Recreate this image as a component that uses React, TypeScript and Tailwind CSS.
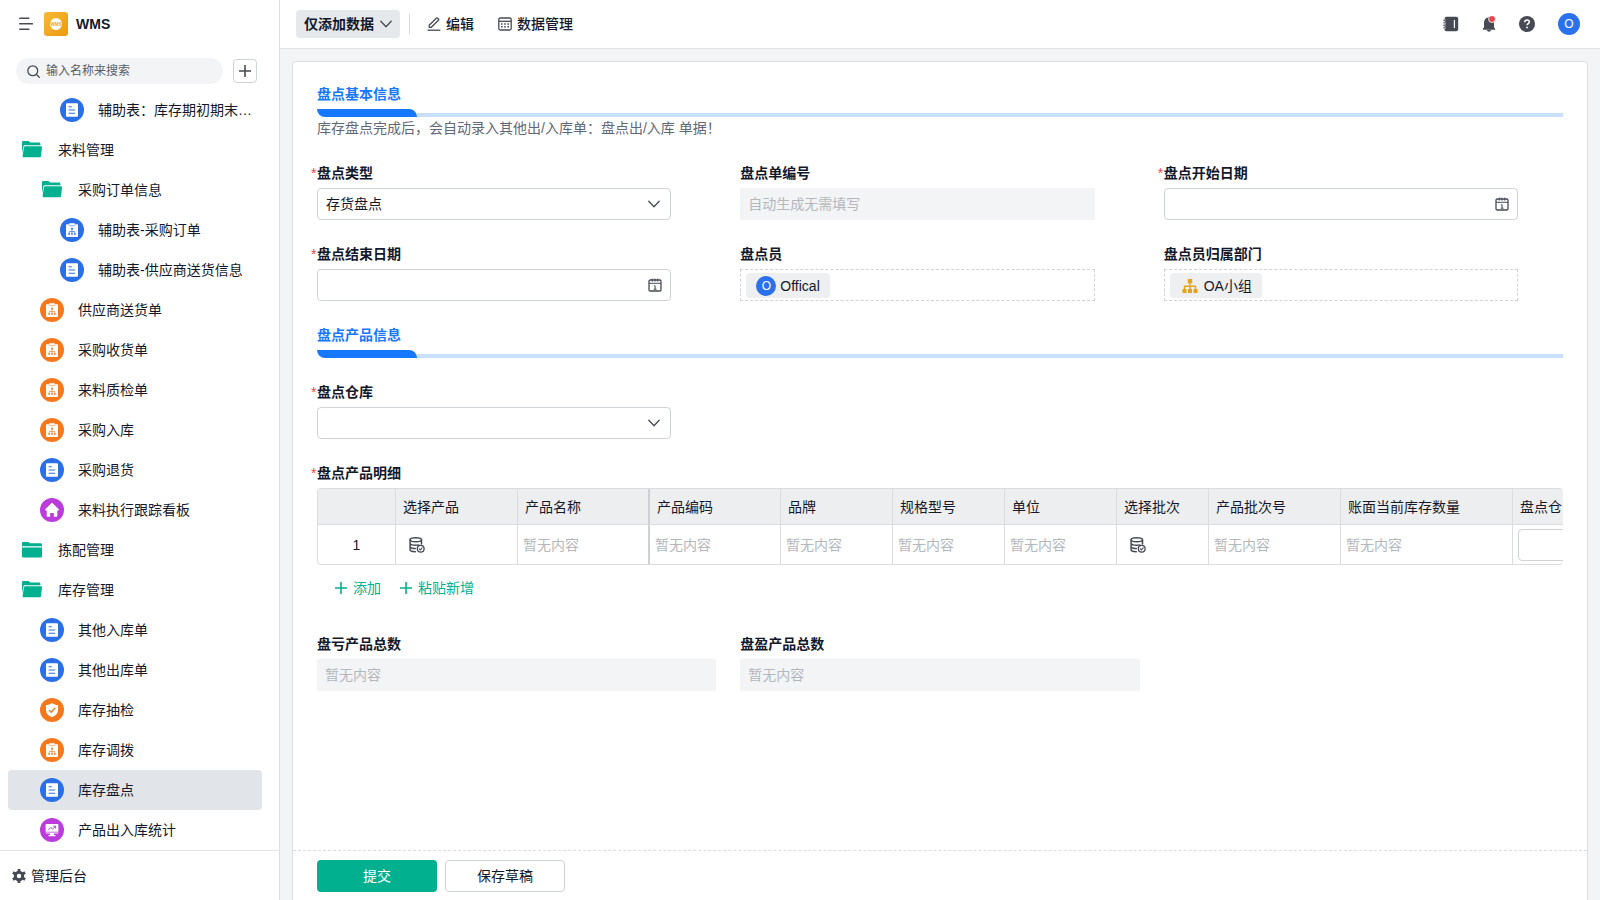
import { useId, type ReactNode } from 'react'

type IconKind = 'folder' | 'folderOpen' | 'form' | 'flow' | 'home' | 'shield' | 'chart'

interface MenuItem {
    name: string
    level: 0 | 1 | 2
    icon: IconKind
    color: string
    active?: boolean
}

const BLUE = 'text-[#2a6fe5]'
const ORANGE = 'text-[#f5781d]'
const PURPLE = 'text-[#bb3bdb]'
const GREEN = 'text-[#00b08f]'

const menu: MenuItem[] = [
    { name: '辅助表：库存期初期末…', level: 2, icon: 'form', color: BLUE },
    { name: '来料管理', level: 0, icon: 'folderOpen', color: GREEN },
    { name: '采购订单信息', level: 1, icon: 'folderOpen', color: GREEN },
    { name: '辅助表-采购订单', level: 2, icon: 'flow', color: BLUE },
    { name: '辅助表-供应商送货信息', level: 2, icon: 'form', color: BLUE },
    { name: '供应商送货单', level: 1, icon: 'flow', color: ORANGE },
    { name: '采购收货单', level: 1, icon: 'flow', color: ORANGE },
    { name: '来料质检单', level: 1, icon: 'flow', color: ORANGE },
    { name: '采购入库', level: 1, icon: 'flow', color: ORANGE },
    { name: '采购退货', level: 1, icon: 'form', color: BLUE },
    { name: '来料执行跟踪看板', level: 1, icon: 'home', color: PURPLE },
    { name: '拣配管理', level: 0, icon: 'folder', color: GREEN },
    { name: '库存管理', level: 0, icon: 'folderOpen', color: GREEN },
    { name: '其他入库单', level: 1, icon: 'form', color: BLUE },
    { name: '其他出库单', level: 1, icon: 'form', color: BLUE },
    { name: '库存抽检', level: 1, icon: 'shield', color: ORANGE },
    { name: '库存调拨', level: 1, icon: 'flow', color: ORANGE },
    { name: '库存盘点', level: 1, icon: 'form', color: BLUE, active: true },
    { name: '产品出入库统计', level: 1, icon: 'chart', color: PURPLE },
]

const indent = ['pl-3', 'pl-8', 'pl-[52px]']

const columns = [
    { title: '选择产品', width: 'w-[122px]', kind: 'pick' },
    { title: '产品名称', width: 'w-[132px]', kind: 'empty', frozen: true },
    { title: '产品编码', width: 'w-[131px]', kind: 'empty' },
    { title: '品牌', width: 'w-[112px]', kind: 'empty' },
    { title: '规格型号', width: 'w-[112px]', kind: 'empty' },
    { title: '单位', width: 'w-[112px]', kind: 'empty' },
    { title: '选择批次', width: 'w-[92px]', kind: 'pick' },
    { title: '产品批次号', width: 'w-[132px]', kind: 'empty' },
    { title: '账面当前库存数量', width: 'w-[172px]', kind: 'empty' },
    { title: '盘点仓', width: 'w-[172px]', kind: 'input' },
]

function MenuIcon({ kind }: { kind: IconKind }) {
    if (kind === 'folder') {
        return (
            <svg viewBox="0 0 24 24" className="size-6 shrink-0" fill="currentColor" aria-hidden="true">
                <path d="M2 5.200C2 4.500 2.500 4 3.200 4h4.900c.5 0 .8.2 1.100.5l.8.800h10.600c.8 0 1.400.6 1.400 1.400v1.500H2z" />
                <path d="M2 9.600h20v8.600c0 .8-.6 1.400-1.400 1.400H3.400c-.8 0-1.400-.6-1.400-1.400z" />
            </svg>
        )
    }
    if (kind === 'folderOpen') {
        return (
            <svg viewBox="0 0 24 24" className="size-6 shrink-0" fill="currentColor" aria-hidden="true">
                <path d="M2 4.200C2 3.500 2.500 3 3.200 3h4.900c.5 0 .8.2 1.100.5l.8 1h9c.8 0 1.400.6 1.400 1.400v1.300H5c-.9 0-1.500.6-1.700 1.400L2 15.500z" />
                <path d="M5.600 8.200h15.200c.8 0 1.300.7 1.200 1.400l-1 8.300c-.1.900-.8 1.400-1.600 1.400H3.800c-.8 0-1.300-.6-1.200-1.300l1.300-8.400c.1-.8.8-1.400 1.700-1.400z" />
            </svg>
        )
    }
    return (
        <svg viewBox="0 0 24 24" className="size-6 shrink-0" aria-hidden="true">
            <circle cx="12" cy="12" r="12" fill="currentColor" />
            {kind === 'form' && (
                <>
                    <rect x="6" y="5.300" width="12" height="13.500" rx="1" fill="#fff" />
                    <path d="M8.600 8.700h3.200M8.600 12h6.500M8.600 15.200h6.500" stroke="currentColor" strokeWidth="1.100" />
                </>
            )}
            {kind === 'flow' && (
                <>
                    <path d="M7 6.200h2.200V5.200h5.600v1H17c.6 0 1 .4 1 1V18c0 .6-.4 1-1 1H7c-.6 0-1-.4-1-1V7.200c0-.6.4-1 1-1z" fill="#fff" />
                    <path d="M9 6.600c.2.900.6 1.100 1.200 1.100h3.600c.6 0 1-.2 1.200-1.100" stroke="currentColor" strokeWidth=".6" fill="none" />
                    <path d="M12 11v4.500M9.200 15.500v-1.900h5.600v1.900" stroke="currentColor" strokeWidth=".7" fill="none" />
                    <path d="M11.100 9.700h1.800v1.700h-1.800zM8.300 15.200h1.700v1.600H8.300zM11.100 15.200h1.700v1.600h-1.700zM14 15.200h1.700v1.600H14z" fill="currentColor" />
                </>
            )}
            {kind === 'home' && (
                <path d="M11.300 5.300c.4-.4 1-.4 1.400 0l6 6c.5.5.2 1.200-.5 1.200h-.9v5.300c0 .6-.4 1-1 1h-2.500v-3.900h-3.600v3.900H7.700c-.6 0-1-.4-1-1v-5.300h-.9c-.7 0-1-.7-.5-1.200z" fill="#fff" />
            )}
            {kind === 'shield' && (
                <>
                    <path d="M12 5c2 1.400 3.800 2 6 2v5.200c0 3.200-2.400 5.500-6 7.100-3.600-1.600-6-3.900-6-7.100V7c2.200 0 4-.6 6-2z" fill="#fff" />
                    <path d="M9 12l2.200 2.200L15.200 10" stroke="currentColor" strokeWidth="1.300" fill="none" />
                </>
            )}
            {kind === 'chart' && (
                <>
                    <path d="M6.600 6h10.800c.6 0 1 .4 1 1v6.800H5.600V7c0-.6.4-1 1-1zM5.600 14.500h12.800c0 .7-.4 1.100-1 1.100h-3.600l.4 1.400h1.300v1.200H8.500V17h1.300l.4-1.400H6.600c-.6 0-1-.4-1-1.100z" fill="#fff" />
                    <path d="M8.300 11.800l2.400-2.300 1.900 1.500 2.900-2.700M13.300 8.200h2.300v2.200" stroke="currentColor" strokeWidth="1" fill="none" />
                </>
            )}
        </svg>
    )
}

function Chevron({ className }: { className: string }) {
    return (
        <svg viewBox="0 0 12 12" className={className} fill="none" stroke="#474a54" strokeWidth="1.300" strokeLinecap="round" strokeLinejoin="round" aria-hidden="true">
            <path d="M.8 3.200L6 8.700l5.200-5.500" />
        </svg>
    )
}

function Plus({ className }: { className: string }) {
    return (
        <svg viewBox="0 0 12 12" className={className} fill="none" stroke="currentColor" strokeWidth="1.600" aria-hidden="true">
            <path d="M6 0v12M0 6h12" />
        </svg>
    )
}

function PickIcon() {
    return (
        <svg viewBox="0 0 16 16" className="size-4" fill="none" stroke="#474a54" strokeWidth="1.500" strokeLinecap="round" aria-hidden="true">
            <ellipse cx="6.800" cy="2.800" rx="5.700" ry="2" />
            <path d="M1.100 3v9.800c0 1 2.200 1.900 5.200 2M12.500 3v4M1.100 6.500c.5 1 2.800 1.800 5.700 1.800 1.200 0 2.200-.1 3-.4M1.100 9.800c.5.900 2.300 1.600 5.200 1.700" />
            <circle cx="11.700" cy="11.800" r="3.400" strokeWidth="1.300" />
            <path d="M10.200 11.900l1.100 1 1.900-2" strokeWidth="1.100" />
        </svg>
    )
}

function Label({ htmlFor, required, children }: { htmlFor?: string; required?: boolean; children: ReactNode }) {
    return (
        <label htmlFor={htmlFor} className="flex leading-6 font-bold">
            {required && <span className="-ml-1.5 w-1.5 font-normal text-[#e5484d]">*</span>}
            {children}
        </label>
    )
}

function SelectField({ label, value }: { label: string; value: string }) {
    const id = useId()
    return (
        <div className="flex flex-col gap-[3px] pr-[45px]">
            <Label htmlFor={id} required>{label}</Label>
            <div className="relative">
                <select id={id} defaultValue={value} className="block h-8 w-full appearance-none rounded border border-[#cfd2d6] bg-white pl-2 pr-8">
                    <option value={value}>{value}</option>
                </select>
                <Chevron className="pointer-events-none absolute right-[11px] top-2.5 size-3" />
            </div>
        </div>
    )
}

function DateField({ label }: { label: string }) {
    const id = useId()
    return (
        <div className="flex flex-col gap-[3px] pr-[45px]">
            <Label htmlFor={id} required>{label}</Label>
            <div className="relative">
                <input id={id} type="text" className="block h-8 w-full rounded border border-[#cfd2d6] bg-white pl-2 pr-8" />
                <svg viewBox="0 0 14 14" className="pointer-events-none absolute right-[9px] top-[9px] size-3.5" fill="none" stroke="#474a54" strokeWidth="1.300" aria-hidden="true">
                    <rect x="1" y="2" width="12" height="11" rx="1.200" />
                    <path d="M1 5.300h12M4.300.6v3M7 .6v3M9.700.6v3M5.900 7.800h1.200v3.600M5.700 11.200h2.900" strokeWidth="1" />
                </svg>
            </div>
        </div>
    )
}

function ReadonlyField({ label, placeholder, className }: { label: string; placeholder: string; className?: string }) {
    const id = useId()
    return (
        <div className={`flex flex-col gap-[3px] ${className ?? ''}`}>
            <Label htmlFor={id}>{label}</Label>
            <input id={id} type="text" readOnly placeholder={placeholder} className="block h-8 w-full bg-[#f2f4f6] px-2 placeholder:text-[#b4b7bc]" />
        </div>
    )
}

function ChipField({ label, icon, children }: { label: string; icon: ReactNode; children: ReactNode }) {
    return (
        <div className="flex flex-col gap-[3px] pr-[45px]">
            <div className="leading-6 font-bold">{label}</div>
            <div className="flex h-8 items-end border border-dashed border-[#cfd2d6] px-[5px] pb-0.5">
                <span className="flex h-[25px] items-center gap-1 rounded-sm bg-[#eeeff1] px-2.5">
                    {icon}
                    {children}
                </span>
            </div>
        </div>
    )
}

function SectionTitle({ children }: { children: ReactNode }) {
    return (
        <div className="flex flex-col gap-[3px]">
            <h2 className="leading-6 font-bold text-[#1677ff]">{children}</h2>
            <div className="flex items-end">
                <div className="h-2 w-[100px] rounded-tr-lg rounded-bl-lg bg-[#1677ff]" />
                <div className="h-1 flex-1 bg-[#c8e0fc]" />
            </div>
        </div>
    )
}

function Sidebar() {
    return (
        <aside className="flex w-[280px] shrink-0 flex-col border-r border-[#dcdfe2] bg-white">
            <div className="flex h-12 shrink-0 items-center pl-[19px]">
                <button aria-label="收起菜单">
                    <svg viewBox="0 0 14 14" className="size-3.5" fill="none" stroke="#474a54" strokeWidth="1.600" strokeLinecap="round">
                        <path d="M.8 1.300h9M.8 6.800h12.600M.8 12.300h9" />
                    </svg>
                </button>
                <svg viewBox="0 0 24 24" className="ml-[11px] size-6" aria-hidden="true">
                    <defs>
                        <linearGradient id="logo" x1="0" y1="0" x2="1" y2="1">
                            <stop offset="0" stopColor="#f8b938" />
                            <stop offset="1" stopColor="#eb9a0c" />
                        </linearGradient>
                    </defs>
                    <rect width="24" height="24" rx="3" fill="url(#logo)" />
                    <circle cx="12" cy="12" r="6" fill="#fff" />
                    <text x="12" y="13.600" textAnchor="middle" fontSize="4.500" fontWeight="700" fill="#f0a41c">WMS</text>
                </svg>
                <h1 className="ml-2 font-bold">WMS</h1>
            </div>

            <div className="flex h-[42px] shrink-0 items-center gap-2.5 pt-1 pr-[22px] pl-4 text-xs">
                <label className="flex h-[26px] min-w-0 flex-1 items-center gap-1.5 rounded-full bg-[#f2f4f6] pl-[11px]">
                    <svg viewBox="0 0 14 14" className="size-[13px] shrink-0" fill="none" stroke="#474a54" strokeWidth="1.400" strokeLinecap="round" aria-hidden="true">
                        <circle cx="6.200" cy="6.200" r="5.300" />
                        <path d="M10.200 10.200l3 3" />
                    </svg>
                    <input type="text" aria-label="搜索" placeholder="输入名称来搜索" className="w-full min-w-0 bg-transparent placeholder:text-[#5a5d66]" />
                </label>
                <button aria-label="新建" className="flex size-6 items-center justify-center rounded border border-[#cfd2d6] text-[#474a54]">
                    <Plus className="size-3" />
                </button>
            </div>

            <nav className="min-h-0 flex-1 overflow-hidden pr-[17px] pl-2">
                {menu.map((item) => (
                    <a
                        key={item.name}
                        href="#"
                        className={`flex h-10 items-center gap-3.5 rounded ${indent[item.level]} ${item.active ? 'bg-[#e1e4e8]' : ''}`}
                    >
                        <span className={item.color}>
                            <MenuIcon kind={item.icon} />
                        </span>
                        <span className="truncate">{item.name}</span>
                    </a>
                ))}
            </nav>

            <a href="#" className="flex h-[50px] shrink-0 items-center gap-[5px] border-t border-[#e1e4e7] pl-3">
                <svg viewBox="0 0 14 14" className="size-3.5" aria-hidden="true">
                    <circle cx="7" cy="7" r="3.700" fill="none" stroke="#474a54" strokeWidth="3" />
                    <path d="M7 0v3M7 11v3M.9 3.500L3.500 5M10.500 9l2.600 1.500M.9 10.500L3.500 9M10.500 5l2.600-1.500" stroke="#474a54" strokeWidth="2.800" />
                </svg>
                管理后台
            </a>
        </aside>
    )
}

function TopBar() {
    return (
        <header className="flex h-[49px] shrink-0 items-center border-b border-[#e1e4e7] bg-white pr-5 pl-4 font-medium">
            <button className="flex h-7 items-center gap-1.5 rounded bg-[#e6e9ec] px-2 font-bold">
                仅添加数据
                <Chevron className="size-3" />
            </button>
            <span className="ml-[9px] h-5 w-px bg-[#d3d6da]" />
            <button className="ml-[17px] flex items-center gap-[5px]">
                <svg viewBox="0 0 14 14" className="size-3.5" fill="none" stroke="#474a54" strokeWidth="1.300" strokeLinejoin="round" aria-hidden="true">
                    <path d="M2.200 10.300v-2L9.300 1.200c.4-.4.900-.4 1.300 0l.8.8c.4.4.4.9 0 1.300l-7.100 7z" />
                    <path d="M.6 13.200h12.800" />
                </svg>
                编辑
            </button>
            <button className="ml-6 flex items-center gap-[5px]">
                <svg viewBox="0 0 14 14" className="size-3.5" fill="none" stroke="#474a54" strokeWidth="1.300" aria-hidden="true">
                    <rect x=".8" y="1" width="12.400" height="12" rx="1.500" />
                    <path d="M.8 4.300h12.400" />
                    <path d="M3 6.900h1.600M6.200 6.900h1.600M9.400 6.900H11M3 9.700h1.600M6.200 9.700h1.600M9.400 9.700H11" strokeWidth="1.500" />
                </svg>
                数据管理
            </button>

            <div className="ml-auto flex items-center">
                <button aria-label="通讯录">
                    <svg viewBox="0 0 16 16" className="size-4" aria-hidden="true">
                        <rect x="1.500" y=".8" width="13.700" height="14.400" rx="2" fill="#474a54" />
                        <path d="M11.400 4v8" stroke="#fff" strokeWidth="1.200" />
                        <path d="M.2 4.300h2.400M.2 6.800h2.400M.2 9.300h2.400M.2 11.800h2.400" stroke="#fff" strokeWidth="1.800" />
                        <path d="M.2 4.300h2.400M.2 6.800h2.400M.2 9.300h2.400M.2 11.800h2.400" stroke="#474a54" strokeWidth="1" />
                    </svg>
                </button>
                <button aria-label="消息" className="ml-[22px]">
                    <svg viewBox="0 0 16 16" className="size-4" aria-hidden="true">
                        <path d="M8 .7c.5 0 .8.3.8.8 2.500.5 4.200 2.300 4.200 5v5l1.200 1.300v.9H1.800v-.9L3 11.500v-5c0-2.700 1.700-4.500 4.200-5 0-.5.3-.8.8-.8zM5.900 14h4.200c-.3 1.100-1.100 1.700-2.100 1.700S6.200 15.100 5.900 14z" fill="#474a54" />
                        <circle cx="11" cy="3" r="3.500" fill="#e5484d" stroke="#fff" strokeWidth=".8" />
                    </svg>
                </button>
                <button aria-label="帮助" className="ml-[22px]">
                    <svg viewBox="0 0 16 16" className="size-4" aria-hidden="true">
                        <circle cx="8" cy="8" r="8" fill="#474a54" />
                        <path d="M5.700 6.200c0-1.400 1-2.200 2.300-2.200s2.300.8 2.300 2c0 1.600-2.200 1.700-2.200 3.300" stroke="#fff" strokeWidth="1.500" fill="none" />
                        <path d="M7.200 10.700h1.700v1.600H7.200z" fill="#fff" />
                    </svg>
                </button>
                <button aria-label="个人中心" className="ml-[23px] flex size-[22px] items-center justify-center rounded-full bg-[#2b71eb] text-xs font-normal text-white">
                    O
                </button>
            </div>
        </header>
    )
}

function DetailTable() {
    return (
        <div className="flex flex-col pb-2.5">
            <div className="flex flex-col gap-[3px]">
                <div className="flex leading-6 font-bold">
                    <span className="-ml-1.5 w-1.5 font-normal text-[#e5484d]">*</span>
                    盘点产品明细
                </div>
                <div className="overflow-hidden rounded border border-r-0 border-[#dadcdf]">
                    <table className="w-[1367px] table-fixed border-separate border-spacing-0 text-left">
                        <thead>
                            <tr className="h-9 bg-[#edeef0]">
                                <th className="w-[78px] border-r border-b border-[#dadcdf]" />
                                {columns.map((col) => (
                                    <th
                                        key={col.title}
                                        className={`${col.width} border-b border-[#dadcdf] px-[7px] font-normal ${col.frozen ? 'border-r-2 border-r-[#cdd0d4]' : 'border-r'}`}
                                    >
                                        {col.title}
                                    </th>
                                ))}
                            </tr>
                        </thead>
                        <tbody>
                            <tr className="h-[39px]">
                                <td className="border-r border-[#dadcdf] p-0 text-center">1</td>
                                {columns.map((col) => (
                                    <td
                                        key={col.title}
                                        className={`border-[#dadcdf] px-[5px] py-0 text-[#b4b7bc] ${col.frozen ? 'border-r-2 border-r-[#cdd0d4]' : 'border-r'}`}
                                    >
                                        {col.kind === 'empty' && '暂无内容'}
                                        {col.kind === 'pick' && (
                                            <button aria-label={col.title} className="ml-2 block">
                                                <PickIcon />
                                            </button>
                                        )}
                                        {col.kind === 'input' && (
                                            <input type="text" aria-label={col.title} className="block h-8 w-full rounded border border-[#cfd2d6]" />
                                        )}
                                    </td>
                                ))}
                            </tr>
                        </tbody>
                    </table>
                </div>
            </div>
            <div className="flex gap-[19px] pt-[11px] pl-[18px] leading-6 text-[#00b08f]">
                <button className="flex items-center gap-1.5">
                    <Plus className="size-3" />
                    添加
                </button>
                <button className="flex items-center gap-1.5">
                    <Plus className="size-3" />
                    粘贴新增
                </button>
            </div>
        </div>
    )
}

export default function App() {
    return (
        <div className="flex h-screen overflow-hidden bg-[#f2f4f6] font-['Liberation_Sans','Noto_Sans_CJK_SC',sans-serif] text-sm text-[#14182b]">
            <Sidebar />
            <div className="flex min-w-0 flex-1 flex-col">
                <TopBar />
                <main className="flex min-h-0 flex-1 flex-col px-3 pt-3">
                    <form className="flex min-h-0 flex-1 flex-col rounded-t border border-b-0 border-[#dcdfe2] bg-white" onSubmit={(e) => e.preventDefault()}>
                        <div className="flex min-h-0 flex-1 flex-col gap-[22px] overflow-hidden px-6 pt-5">
                            <div>
                                <SectionTitle>盘点基本信息</SectionTitle>
                                <p className="leading-[22px] text-[#5f6778]">库存盘点完成后，会自动录入其他出/入库单：盘点出/入库 单据！</p>
                            </div>

                            <div className="grid grid-cols-3 gap-x-6 gap-y-[22px]">
                                <SelectField label="盘点类型" value="存货盘点" />
                                <ReadonlyField label="盘点单编号" placeholder="自动生成无需填写" className="pr-[45px]" />
                                <DateField label="盘点开始日期" />
                                <DateField label="盘点结束日期" />
                                <ChipField
                                    label="盘点员"
                                    icon={<span className="flex size-5 items-center justify-center rounded-full bg-[#2b71eb] text-xs text-white">O</span>}
                                >
                                    Offical
                                </ChipField>
                                <ChipField
                                    label="盘点员归属部门"
                                    icon={
                                        <svg viewBox="0 0 20 20" className="size-5" fill="none" stroke="#e5a21a" strokeWidth="1.400" aria-hidden="true">
                                            <path d="M10 7v6M4.500 13v-2.700h11V13" />
                                            <path d="M7.800 3h4.400v4.200H7.800zM2.500 13h4v4h-4zM8 13h4v4H8zM13.500 13h4v4h-4z" fill="#e5a21a" stroke="none" />
                                        </svg>
                                    }
                                >
                                    OA小组
                                </ChipField>
                            </div>

                            <SectionTitle>盘点产品信息</SectionTitle>

                            <div className="grid grid-cols-3 gap-x-6">
                                <SelectField label="盘点仓库" value="" />
                            </div>

                            <DetailTable />

                            <div className="grid grid-cols-3 gap-x-6">
                                <ReadonlyField label="盘亏产品总数" placeholder="暂无内容" />
                                <ReadonlyField label="盘盈产品总数" placeholder="暂无内容" />
                            </div>
                        </div>

                        <div className="flex shrink-0 gap-2 border-t border-dashed border-[#d9dce0] px-6 pt-[9px] pb-2">
                            <button type="submit" className="h-8 w-[120px] rounded bg-[#00b08f] text-white">提交</button>
                            <button type="button" className="h-8 w-[120px] rounded border border-[#cfd2d6] bg-white">保存草稿</button>
                        </div>
                    </form>
                </main>
            </div>
        </div>
    )
}
